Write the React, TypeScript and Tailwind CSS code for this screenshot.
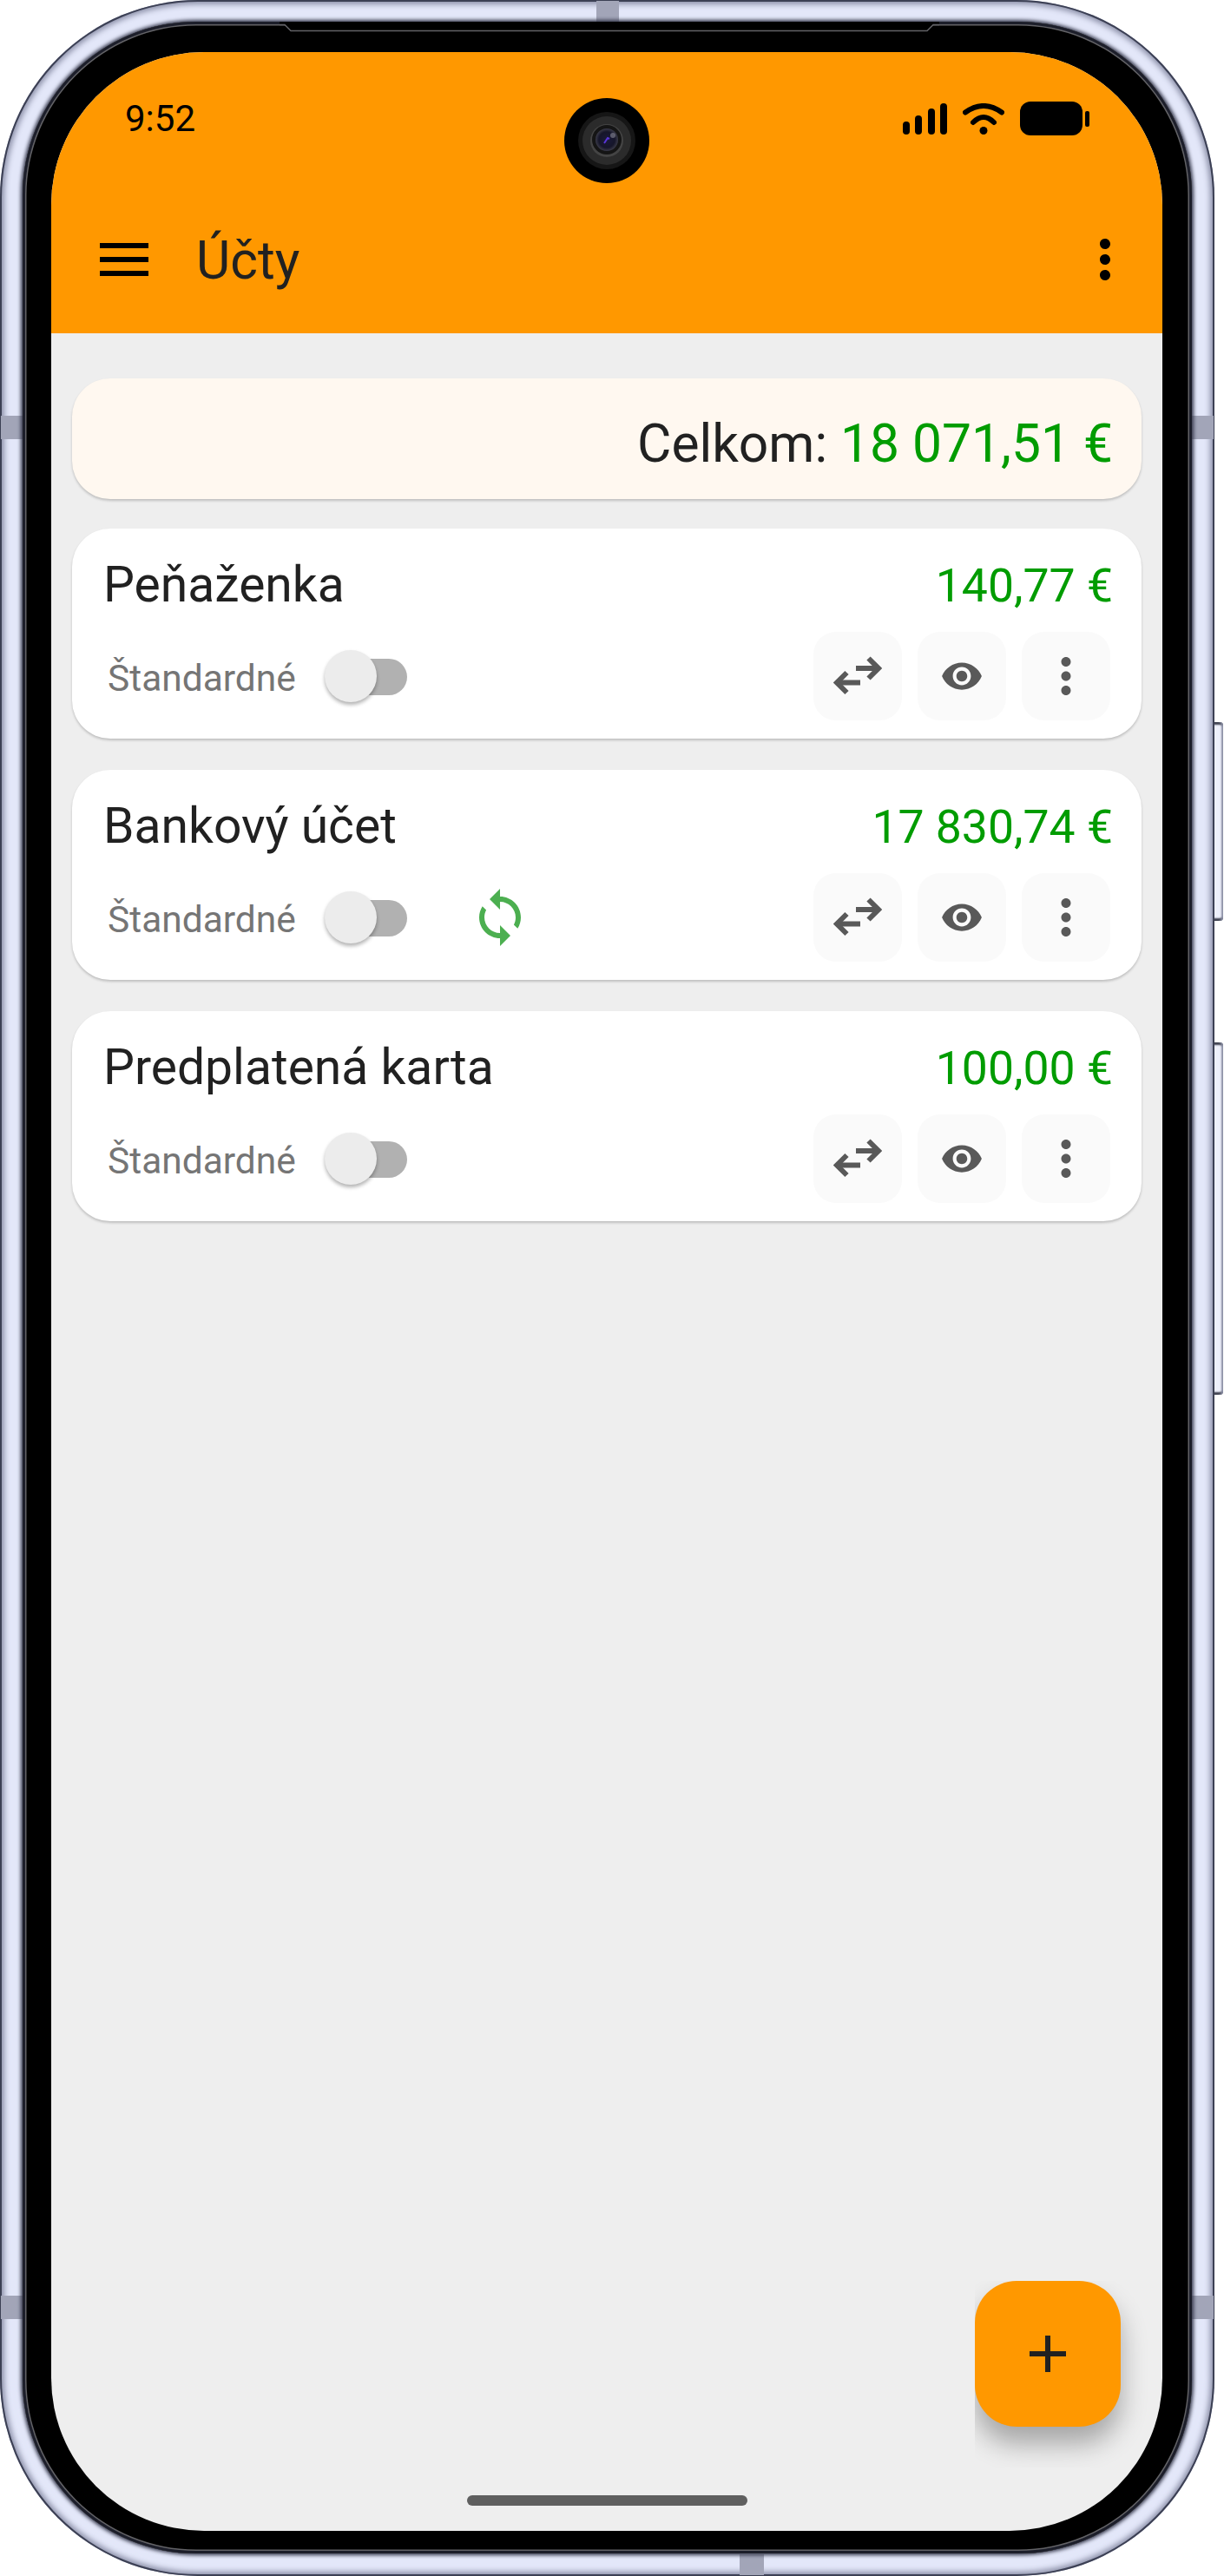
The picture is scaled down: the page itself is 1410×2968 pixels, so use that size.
import React from "react";

// Material icon paths
const MORE_VERT =
  "M12 8c1.1 0 2-.9 2-2s-.9-2-2-2-2 .9-2 2 .9 2 2 2zm0 2c-1.1 0-2 .9-2 2s.9 2 2 2 2-.9 2-2-.9-2-2-2zm0 6c-1.1 0-2 .9-2 2s.9 2 2 2 2-.9 2-2-.9-2-2-2z";
const VISIBILITY =
  "M12 4.5C7 4.5 2.73 7.61 1 12c1.73 4.39 6 7.5 11 7.5s9.27-3.11 11-7.5c-1.73-4.39-6-7.5-11-7.5zM12 17c-2.76 0-5-2.24-5-5s2.24-5 5-5 5 2.24 5 5-2.24 5-5 5zm0-8c-1.66 0-3 1.34-3 3s1.34 3 3 3 3-1.34 3-3-1.34-3-3-3z";
const SYNC =
  "M12 4V1L8 5l4 4V6c3.31 0 6 2.69 6 6 0 1.01-.25 1.97-.7 2.8l1.46 1.46C19.54 15.03 20 13.57 20 12c0-4.42-3.58-8-8-8zm0 14c-3.31 0-6-2.69-6-6 0-1.01.25-1.97.7-2.8L5.24 7.74C4.46 8.97 4 10.43 4 12c0 4.42 3.58 8 8 8v3l4-4-4-4v3z";

const Camera = () => (
  <svg width="98" height="98" viewBox="0 0 98 98" className="absolute left-[591px] top-[53px]">
    <defs>
      <radialGradient id="lens" cx="50%" cy="50%" r="50%">
        <stop offset="0%" stopColor="#1a1a3a" />
        <stop offset="70%" stopColor="#16162a" />
        <stop offset="100%" stopColor="#3a3a48" />
      </radialGradient>
    </defs>
    <circle cx="49" cy="49" r="49" fill="#000" />
    <circle cx="49" cy="49" r="33" fill="#161616" />
    <circle cx="49" cy="49" r="28" fill="#2b2b2b" />
    <circle cx="49" cy="49" r="19" fill="#444" />
    <circle cx="49" cy="48" r="17" fill="#151515" />
    <circle cx="49" cy="48" r="13" fill="url(#lens)" />
    <path d="M46 52l4-6 2 1" stroke="#5a35d8" strokeWidth="2" fill="none" />
    <circle cx="56" cy="43" r="3" fill="#8a8a98" opacity="0.6" />
  </svg>
);

const StatusIcons = () => (
  <div className="flex items-center gap-[18px] pr-[84px]">
    <svg width="51" height="36" viewBox="0 0 51 36" fill="#000">
      <rect x="0" y="21" width="8" height="15" rx="4" />
      <rect x="14" y="14" width="8" height="22" rx="4" />
      <rect x="29" y="6" width="8" height="30" rx="4" />
      <rect x="43" y="0" width="8" height="36" rx="4" />
    </svg>
    <svg width="48" height="36" viewBox="0 0 48 36" fill="none" stroke="#000" strokeWidth="6" strokeLinecap="round">
      <path d="M3 10.5Q24 -4.5 45 10.5" />
      <path d="M12 22Q24 10 36 22" />
      <circle cx="24" cy="31.5" r="4.5" fill="#000" stroke="none" />
    </svg>
    <svg width="80" height="40" viewBox="0 0 80 40" fill="#000">
      <rect x="0" y="0" width="72" height="39" rx="12" />
      <rect x="75" y="11" width="5" height="18" rx="2" />
    </svg>
  </div>
);

const AppBar = () => (
  <div className="flex h-[324px] shrink-0 flex-col bg-[#ff9800]">
    <div className="flex h-[154px] items-center justify-between">
      <span className="pl-[85px] text-[42px] leading-none text-black">9:52</span>
      <StatusIcons />
    </div>
    <div className="flex h-[170px] items-center pl-[56px] pr-[30px]">
      <svg width="56" height="38" viewBox="0 0 56 38" fill="#000">
        <rect width="56" height="6" />
        <rect y="16" width="56" height="6" />
        <rect y="32" width="56" height="6" />
      </svg>
      <h1 className="ml-[55px] pt-[4px] text-[60.500px] font-normal leading-none text-[#212121]">Účty</h1>
      <svg width="72" height="72" viewBox="0 0 24 24" fill="#000" className="ml-auto">
        <path d={MORE_VERT} />
      </svg>
    </div>
  </div>
);

const IconButton = ({ children }: { children: React.ReactNode }) => (
  <button className="flex size-[102px] items-center justify-center rounded-[26px] bg-[#fafafa]">{children}</button>
);

const SwapIcon = () => (
  <svg width="56" height="46" viewBox="0 0 56 46" fill="none" stroke="#595959" strokeWidth="6">
    <path d="M26 14H52" />
    <path d="M40.500 2.500L52 14L40.500 25.500" />
    <path d="M4 30.500H31" />
    <path d="M15.500 19L4 30.500L15.500 42" />
  </svg>
);

const Toggle = () => (
  <div className="relative h-[60px] w-[95px]">
    <div className="absolute left-[10px] top-[10px] h-[42px] w-[85px] rounded-full bg-[#b1b1b1]" />
    <div className="absolute left-0 top-0 size-[60px] rounded-full bg-[#ececec] shadow-[0_3px_4px_rgba(0,0,0,0.3)]" />
  </div>
);

const AccountCard = ({ name, amount, synced }: { name: string; amount: string; synced?: boolean }) => (
  <div className="h-[242px] rounded-[44px] bg-white pl-[36px] pr-[36px] pt-[34px] shadow-[0_2px_3px_rgba(0,0,0,0.2)]">
    <div className="flex h-[64px] items-center justify-between">
      <span className="pb-[3px] text-[57px] leading-none text-[#212121]">{name}</span>
      <span className="-mr-[3px] text-[53.500px] leading-none text-[#009c00]">{amount}</span>
    </div>
    <div className="mt-[21px] flex items-center">
      <span className="ml-[5px] w-[250px] pt-[6px] text-[42.500px] leading-none text-[#757575]">Štandardné</span>
      <Toggle />
      {synced && (
        <svg width="72" height="72" viewBox="0 0 24 24" fill="#4caf50" className="ml-[71px]">
          <path d={SYNC} />
        </svg>
      )}
      <div className="ml-auto flex gap-[18px]">
        <IconButton>
          <SwapIcon />
        </IconButton>
        <IconButton>
          <svg width="50" height="50" viewBox="0 0 24 24" fill="#595959">
            <path d={VISIBILITY} />
          </svg>
        </IconButton>
        <IconButton>
          <svg width="66" height="66" viewBox="0 0 24 24" fill="#595959">
            <path d={MORE_VERT} />
          </svg>
        </IconButton>
      </div>
    </div>
  </div>
);

// Floating action button; its shadow is cut off by the wrapper
const Fab = () => (
  <div className="absolute left-[1064px] top-[2568px] h-[215px] w-[216px] overflow-hidden">
    <button className="flex size-[168px] items-center justify-center rounded-[48px] bg-[#ff9800] shadow-[0_20px_30px_rgba(0,0,0,0.3)]">
      <svg width="42" height="42" viewBox="0 0 42 42" fill="#212121">
        <rect x="18" width="6" height="42" />
        <rect y="18" width="42" height="6" />
      </svg>
    </button>
  </div>
);

const Screen = () => (
  <div className="relative flex h-full flex-col overflow-hidden rounded-[176px] bg-[#eeeeee] font-['Roboto',sans-serif]">
    <AppBar />
    <main className="flex flex-col gap-[36px] px-[24px] pt-[52px]">
      <div className="-mb-[2px] flex h-[139px] items-center justify-end rounded-[44px] bg-[#fff8f0] pr-[33px] shadow-[0_2px_3px_rgba(0,0,0,0.2)]">
        <span className="pt-[13px] text-[60.500px] leading-none text-[#212121]">
          Celkom: <span className="text-[#009c00]">18 071,51 €</span>
        </span>
      </div>
      <AccountCard name="Peňaženka" amount="140,77 €" />
      <AccountCard name="Bankový účet" amount="17 830,74 €" synced />
      <AccountCard name="Predplatená karta" amount="100,00 €" />
    </main>
    <Camera />
    <Fab />
    <div className="absolute left-[479px] top-[2815px] h-[12px] w-[323px] rounded-full bg-[#5f5f5f]" />
  </div>
);

const SideKey = ({ className }: { className: string }) => (
  <div
    className={`absolute left-[1397px] w-[12px] rounded-r-[4px] bg-[#eef0fb] shadow-[inset_-3px_0_2px_-1px_#8a8ea4,inset_0_5px_2px_-2px_#3c3e4c,inset_0_-5px_2px_-2px_#3c3e4c] ${className}`}
  />
);

const AntennaBand = ({ className }: { className: string }) => <div className={`absolute bg-[#a2a5b8] ${className}`} />;

export default function App() {
  return (
    <div className="relative h-[2968px] w-[1410px] overflow-hidden bg-white">
      <SideKey className="top-[832px] h-[229px]" />
      <SideKey className="top-[1201px] h-[406px]" />
      {/* Metal frame */}
      <div className="relative h-[2968px] w-[1399px] rounded-[228px] bg-[#e3e7f9] px-[26px] pb-[26px] pt-[25px] shadow-[inset_0_0_0_2px_#3c4054,inset_0_0_6px_5px_#8d91a9]">
        <AntennaBand className="left-[687px] top-[1px] h-[24px] w-[26px]" />
        <AntennaBand className="bottom-[1px] left-[852px] h-[24px] w-[28px]" />
        <AntennaBand className="left-[1px] top-[479px] h-[27px] w-[25px]" />
        <AntennaBand className="left-[1px] top-[2645px] h-[27px] w-[25px]" />
        <AntennaBand className="right-[1px] top-[479px] h-[27px] w-[25px]" />
        <AntennaBand className="right-[1px] top-[2645px] h-[27px] w-[25px]" />
        {/* Black bezel with its thin inner line */}
        <div className="relative h-full rounded-[200px] bg-black pb-[26px] pl-[33px] pr-[34px] pt-[35px] shadow-[0_0_4px_2px_#34374a,inset_0_0_0_3px_#1c1e2a,inset_0_0_0_4.5px_#626266]">
          {/* Speaker slot along the top edge */}
          <svg width="760" height="12" viewBox="0 0 760 12" className="absolute left-[296px] top-[0px]">
            <path d="M0 3.500H6L13 10.500H746L753 3.500H760V0H0Z" fill="#000" />
            <path d="M0 3.500H6L13 10.500H746L753 3.500H760" fill="none" stroke="#626266" strokeWidth="1.500" />
          </svg>
          <Screen />
        </div>
      </div>
    </div>
  );
}
